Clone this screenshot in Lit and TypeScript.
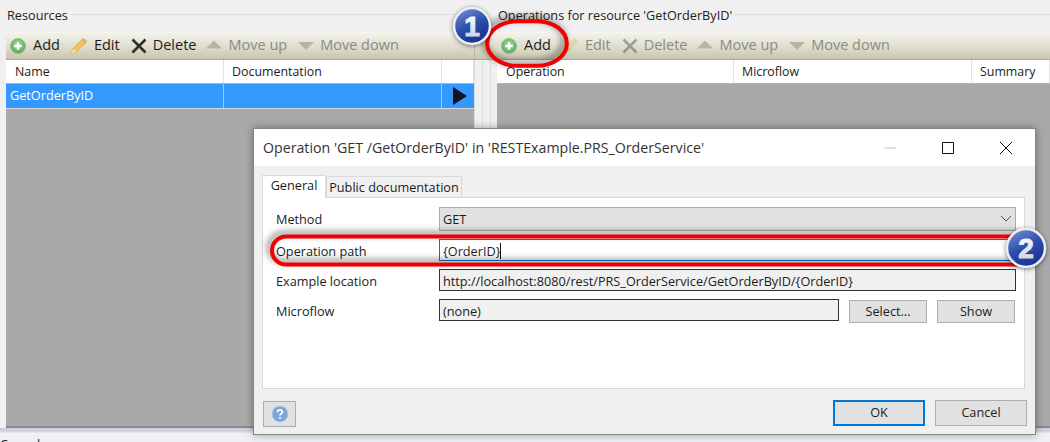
import { css, html, LitElement, svg } from 'lit';
import { customElement } from 'lit/decorators.js';

const addIcon = html`<svg width="18" height="18" viewBox="0 0 18 18">
    <defs><radialGradient id="g" cx="50%" cy="40%" r="60%"><stop offset="0" stop-color="#a8dc9a"/><stop offset="1" stop-color="#5aa55a"/></radialGradient></defs>
    <circle cx="9" cy="9" r="7.5" fill="url(#g)" stroke="#8fbf8a"/>
    <path d="M9 5.2v7.6M5.2 9h7.6" stroke="#fff" stroke-width="2.4"/>
</svg>`;

const pencilIcon = (faded: boolean) => html`<svg width="18" height="18" viewBox="0 0 18 18" opacity=${faded ? 0.35 : 1}>
    <path d="M1.5 16.5l1.6-5L12.8 1.8c.8-.6 2.6.9 3.4 1.9.5.7.3 1.2-.2 1.7L6.4 15z" fill="#f2c45a" stroke="#d9a441" stroke-width=".8"/>
    <path d="M1.5 16.5l1.6-5 3.3 3.5z" fill="#f3dcb0"/>
    <path d="M12.4 2.2l3.6 3.4" stroke="#e2a08a" stroke-width="1.6"/>
</svg>`;

const deleteIcon = (faded: boolean) => html`<svg width="18" height="18" viewBox="0 0 18 18" opacity=${faded ? 0.38 : 1}>
    <path d="M2.5 2.5l13 13M15.5 2.5l-13 13" stroke="#2f2f2f" stroke-width="2.6"/>
</svg>`;

const upIcon = html`<svg width="18" height="18" viewBox="0 0 18 18"><path d="M9 3.5l8 8H1z" fill="#b5b4a6"/></svg>`;
const downIcon = html`<svg width="18" height="18" viewBox="0 0 18 18"><path d="M1 5h16l-8 8z" fill="#b5b4a6"/></svg>`;

const toolbarBg = css`linear-gradient(#f5f4ee, #dddbca 60%, #c8c6ae)`;

@customElement('x-toolbar')
export class Toolbar extends LitElement {
    static properties = { faded: { type: Boolean } };
    faded = false;

    static styles = css`
        :host {
            display: flex;
            align-items: center;
            gap: 10px;
            height: 28px;
            padding: 0 0 2px 3px;
            box-sizing: border-box;
            background: ${toolbarBg};
            border-bottom: 1px solid #a9a78f;
            border-radius: 2px 2px 0 0;
            font-size: 14.5px;
        }
        .item {
            display: flex;
            align-items: center;
            gap: 5px;
            color: #1c1c1c;
        }
        .item:nth-child(-n + 2) {
            gap: 6px;
        }
        .item:nth-child(3) {
            margin-right: -1px;
        }
        .off {
            color: #8a8a84;
        }
        svg {
            display: block;
            margin-top: 2px;
        }
    `;

    render() {
        return html`
            <div class="item">${addIcon}Add</div>
            <div class="item ${this.faded ? 'off' : ''}">${pencilIcon(this.faded)}Edit</div>
            <div class="item ${this.faded ? 'off' : ''}">${deleteIcon(this.faded)}Delete</div>
            <div class="item off">${upIcon}Move up</div>
            <div class="item off">${downIcon}Move down</div>`;
    }
}

@customElement('app-root')
export class AppRoot extends LitElement {
    static styles = css`
        :host {
            display: block;
            position: relative;
            width: 1050px;
            height: 442px;
            overflow: hidden;
            background: #f0f0f0;
            font-family: "Open Sans", "Noto Sans", sans-serif;
            font-size: 12.7px;
            color: #1c1c1c;
        }
        .panes {
            display: flex;
            height: 428px;
            padding-left: 6px;
            box-sizing: border-box;
        }
        .pane {
            display: flex;
            flex-direction: column;
        }
        .left {
            width: 468px;
        }
        .right {
            flex: 1;
        }
        .legend {
            display: flex;
            align-items: center;
            gap: 3px;
            height: 32px;
            padding: 0 0 2px 1px;
            box-sizing: border-box;
            color: #222;
        }
        .legend::after {
            content: "";
            flex: 1;
            height: 1px;
            margin-top: -2px;
            background: #dcdcdc;
        }
        .splitter {
            width: 23px;
            margin-top: 32px;
            display: flex;
            flex-direction: column;
        }
        .splitter .cap {
            height: 28px;
            flex: none;
            box-sizing: border-box;
            background: ${toolbarBg};
            border-bottom: 1px solid #a9a78f;
            border-left: 1px solid #b9b7a0;
        }
        .splitter .lines {
            flex: 1;
            display: flex;
            justify-content: center;
            gap: 7px;
            border-left: 1px solid #dcdcdc;
        }
        .splitter i {
            width: 1px;
            background: #dcdcdc;
        }
        .table {
            flex: 1;
            background: #a9a9a9;
            border-bottom: 2px solid #8a8a8a;
        }
        .head,
        .row {
            display: grid;
            align-items: center;
        }
        .left .head,
        .left .row {
            grid-template-columns: 218px 218px 32px;
        }
        .right .head {
            grid-template-columns: 237px 238px 1fr;
        }
        .head {
            height: 23px;
            background: #fff;
            border-bottom: 1px solid #b4b4b4;
            font-size: 12.4px;
        }
        .head span {
            height: 100%;
            display: flex;
            align-items: center;
            padding: 0 0 1px 8px;
            box-sizing: border-box;
            border-right: 1px solid #e2e2e2;
        }
        .left .head span:first-child,
        .right .head span:first-child {
            padding-left: 9px;
        }
        .row {
            height: 25px;
            background: #3399ff;
            border-bottom: 1px solid #d8d8d8;
            box-sizing: border-box;
            color: #fff;
        }
        .row span {
            height: 100%;
            display: flex;
            align-items: center;
            padding: 0 0 2px 4px;
            box-sizing: border-box;
            border-right: 1px solid #9cc9f5;
        }
        .row .arrow {
            border: 0;
            padding: 0 0 0 10px;
        }
        .status {
            height: 14px;
            padding-top: 9px;
            box-sizing: border-box;
            background: linear-gradient(#c9ccd6 0, #d4d6de 4px, #eef0f5 5px);
            line-height: 15px;
        }

        /* the dialog window lies over the panes */
        .dialog {
            position: absolute;
            left: 253px;
            top: 128px;
            width: 783px;
            height: 307px;
            box-sizing: border-box;
            display: flex;
            flex-direction: column;
            background: #f0f0f0;
            border: 1px solid #7c8a7c;
            box-shadow: 0 0 8px rgba(0, 0, 0, 0.35);
        }
        .title {
            height: 37px;
            flex: none;
            display: flex;
            align-items: center;
            justify-content: space-between;
            padding: 0 23px 0 9px;
            background: #fff;
            font-size: 14.2px;
            color: #333;
        }
        .winbtns {
            display: flex;
            align-items: center;
            gap: 46px;
        }
        .winbtns svg {
            display: block;
        }
        .tabs {
            display: flex;
            align-items: flex-end;
            height: 23px;
            margin: 9px 0 0 8px;
            position: relative;
            z-index: 1;
        }
        .tab {
            display: flex;
            align-items: center;
            justify-content: center;
            box-sizing: border-box;
            height: 21px;
            width: 136px;
            margin-bottom: 1px;
            border: 1px solid #d9d9d9;
            border-bottom: 0;
            background: #f0f0f0;
        }
        .tab.on {
            height: 23px;
            width: 64px;
            margin-bottom: 0;
            padding-bottom: 4px;
            background: #fff;
        }
        .panel {
            margin: -1px 10px 0 8px;
            height: 192px;
            box-sizing: border-box;
            border: 1px solid #d9d9d9;
            background: #fff;
            padding: 9px 8px 0 13px;
        }
        .form {
            display: grid;
            grid-template-columns: 163px 1fr;
            grid-template-rows: 24px 22px 22px 22px;
            row-gap: 8px;
            align-items: center;
        }
        .form > span {
            padding-top: 2px;
        }
        .form > span:first-child {
            padding-top: 0;
        }
        .box {
            height: 100%;
            display: flex;
            align-items: center;
            padding: 2px 0 0 3px;
            box-sizing: border-box;
            border: 1px solid #333;
            background: #f0f0f0;
        }
        .select {
            justify-content: space-between;
            padding: 0 3px 0 3px;
            background: #e1e1e1;
            border-color: #adadad;
        }
        .input {
            background: #fff;
            border-color: #0078d7;
        }
        .caret {
            width: 1px;
            height: 16px;
            background: #111;
        }
        .flowrow {
            display: flex;
            align-items: flex-start;
            gap: 10px;
            height: 100%;
            margin-right: 1px;
        }
        .flowrow .box {
            flex: 1;
        }
        .btn {
            display: flex;
            align-items: center;
            justify-content: center;
            padding-bottom: 2px;
            box-sizing: border-box;
            border: 1px solid #adadad;
            background: #e1e1e1;
            color: #1c1c1c;
        }
        .flowrow .btn {
            width: 78px;
            height: 23px;
            margin-top: 1px;
        }
        .footer {
            display: flex;
            align-items: center;
            justify-content: flex-end;
            gap: 10px;
            margin: 10px 8px 0 9px;
        }
        .footer .btn {
            width: 92px;
            height: 26px;
        }
        .footer .ok {
            border: 2px solid #0078d7;
        }
        .footer .help {
            width: 33px;
            margin: 2px auto 0 0;
            padding: 0;
        }

        /* callouts drawn on top of the screenshot */
        .marks {
            position: absolute;
            left: 0;
            top: 0;
            pointer-events: none;
        }
        .ring {
            fill: none;
            stroke: #f00000;
            stroke-width: 4;
            filter: drop-shadow(-3px -3px 3px rgba(0, 0, 0, 0.5));
        }
        .disc {
            stroke: #eceef4;
            stroke-width: 2.5;
            filter: drop-shadow(0 1px 2px rgba(0, 0, 0, 0.5));
        }
        .num {
            font-family: "Liberation Sans", sans-serif;
            font-weight: 700;
            font-size: 28px;
            text-anchor: middle;
            stroke-width: 1;
        }
    `;

    render() {
        return html`
            <div class="panes">
                <section class="pane left">
                    <div class="legend">Resources</div>
                    <x-toolbar></x-toolbar>
                    <div class="table">
                        <div class="head"><span>Name</span><span>Documentation</span><span></span></div>
                        <div class="row">
                            <span>GetOrderByID</span><span></span>
                            <span class="arrow">
                                <svg width="16" height="20" viewBox="0 0 16 20"><path d="M1 1l14 9-14 9z" fill="#15151f"/></svg>
                            </span>
                        </div>
                    </div>
                </section>
                <div class="splitter">
                    <div class="cap"></div>
                    <div class="lines"><i></i><i></i></div>
                </div>
                <section class="pane right">
                    <div class="legend">Operations for resource 'GetOrderByID'</div>
                    <x-toolbar faded></x-toolbar>
                    <div class="table">
                        <div class="head"><span>Operation</span><span>Microflow</span><span>Summary</span></div>
                    </div>
                </section>
            </div>
            <div class="status">Console</div>

            <div class="dialog">
                <div class="title">
                    <span>Operation 'GET /GetOrderByID' in 'RESTExample.PRS_OrderService'</span>
                    <div class="winbtns">
                        <svg width="12" height="12" viewBox="0 0 12 12"><path d="M0 6h12" stroke="#c4c4c4"/></svg>
                        <svg width="12" height="12" viewBox="0 0 12 12"><path d="M.5.5h11v11H.5z" fill="none" stroke="#111"/></svg>
                        <svg width="12" height="12" viewBox="0 0 12 12"><path d="M0 0l12 12M12 0L0 12" stroke="#111"/></svg>
                    </div>
                </div>
                <div class="tabs">
                    <div class="tab on">General</div>
                    <div class="tab">Public documentation</div>
                </div>
                <div class="panel">
                    <div class="form">
                        <span>Method</span>
                        <div class="box select">GET
                            <svg width="12" height="8" viewBox="0 0 12 8"><path d="M1 1l5 5 5-5" fill="none" stroke="#555"/></svg>
                        </div>
                        <span>Operation path</span>
                        <div class="box input">{OrderID}<i class="caret"></i></div>
                        <span>Example location</span>
                        <div class="box">http://localhost:8080/rest/PRS_OrderService/GetOrderByID/{OrderID}</div>
                        <span>Microflow</span>
                        <div class="flowrow">
                            <div class="box">(none)</div>
                            <div class="btn">Select...</div>
                            <div class="btn">Show</div>
                        </div>
                    </div>
                </div>
                <div class="footer">
                    <div class="btn help">
                        <svg width="18" height="18" viewBox="0 0 18 18">
                            <circle cx="9" cy="9" r="8" fill="#7fa5d6" stroke="#b5cbe6"/>
                            <path d="M6.6 7.2c0-3 4.8-3 4.8-.2 0 1.7-2.4 1.7-2.4 3.4" fill="none" stroke="#fff" stroke-width="1.8"/>
                            <circle cx="9" cy="13" r="1.1" fill="#fff"/>
                        </svg>
                    </div>
                    <div class="btn ok">OK</div>
                    <div class="btn">Cancel</div>
                </div>
            </div>

            <svg class="marks" width="1050" height="442" viewBox="0 0 1050 442">
                <defs>
                    <linearGradient id="badge" x1="0.2" y1="0" x2="0.7" y2="1">
                        <stop offset="0" stop-color="#6f8ed8"/>
                        <stop offset="0.5" stop-color="#2c4cab"/>
                        <stop offset="1" stop-color="#16308f"/>
                    </linearGradient>
                    <linearGradient id="numeral" x1="0" y1="0" x2="0" y2="1">
                        <stop offset="0" stop-color="#ffffff"/>
                        <stop offset="1" stop-color="#c9cede"/>
                    </linearGradient>
                </defs>
                <rect class="ring" x="487.2" y="21.2" width="79.6" height="44.6" rx="30" ry="22"/>
                <rect class="ring" x="272" y="236.5" width="760" height="28" rx="14"/>
                ${this.badge(472, 26, 18, '1')}
                ${this.badge(1026, 248, 19, '2')}
            </svg>`;
    }

    badge(x: number, y: number, r: number, n: string) {
        return svg`<circle class="disc" cx=${x} cy=${y} r=${r} fill="url(#badge)"/>
            <text class="num" x=${x} y=${y + 10} fill="url(#numeral)" stroke="url(#numeral)">${n}</text>`;
    }
}
